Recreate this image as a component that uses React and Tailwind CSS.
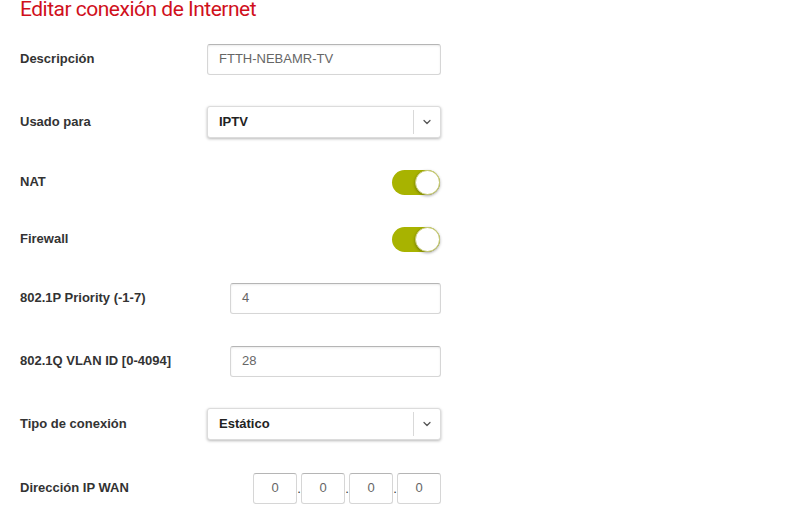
import { ChevronDown } from "lucide-react";

const labelCls = "w-[187px] shrink-0 text-[13px] font-bold text-[#333]";

const TextInput = ({ value, className = "" }) => (
  <div
    className={`h-[31px] flex items-center px-[11px] border border-[#d6d6d6] border-t-[#b5b5b5] rounded-[3px] shadow-[inset_0_1px_2px_rgba(0,0,0,0.08)] text-[13px] text-[#666] bg-white ${className}`}
  >
    {value}
  </div>
);

const Select = ({ value }) => (
  <div className="w-[234px] h-[32px] flex items-center border border-[#dcdcdc] rounded-[3px] shadow-[0_1px_3px_rgba(0,0,0,0.28)] bg-white">
    <span className="flex-1 pl-[11px] text-[13px] font-bold text-[#222]">{value}</span>
    <div className="w-px h-[24px] bg-[#d9d9d9]" />
    <div className="w-[26px] flex justify-center">
      <ChevronDown size={12} strokeWidth={2.5} className="text-[#555]" />
    </div>
  </div>
);

const Toggle = () => (
  <div className="ml-auto mr-[1px] w-[48px] h-[25px] rounded-full bg-[#a8b300] relative">
    <div className="absolute right-[0px] top-[0px] w-[25px] h-[25px] rounded-full bg-white border border-[#c9cc7a] shadow-[0_1px_3px_rgba(0,0,0,0.35)]" />
  </div>
);

const Row = ({ label, h, children }) => (
  <div className={`flex items-center ${h}`}>
    <div className={labelCls}>{label}</div>
    <div className="w-[234px] flex">{children}</div>
  </div>
);

export default function App() {
  const octets = ["0", "0", "0", "0"];
  return (
    <div className="w-[786px] h-[524px] overflow-hidden bg-white pl-[20px] font-['Liberation_Sans',Arial,sans-serif]">
      <div className="h-[30px]">
        <h1 className="-mt-[2px] text-[21px] leading-[22px] tracking-[-0.5px] text-[#d0101c] font-['Roboto',sans-serif] font-normal">
          Editar conexión de Internet
        </h1>
      </div>

      <Row label="Descripción" h="h-[62px]">
        <TextInput value="FTTH-NEBAMR-TV" className="w-[234px]" />
      </Row>
      <Row label="Usado para" h="h-[64px]">
        <Select value="IPTV" />
      </Row>
      <Row label="NAT" h="h-[56px]">
        <Toggle />
      </Row>
      <Row label="Firewall" h="h-[58px]">
        <Toggle />
      </Row>
      <Row label="802.1P Priority (-1-7)" h="h-[60px]">
        <TextInput value="4" className="ml-[23px] w-[211px]" />
      </Row>
      <Row label="802.1Q VLAN ID [0-4094]" h="h-[66px]">
        <TextInput value="28" className="ml-[23px] w-[211px]" />
      </Row>
      <Row label="Tipo de conexión" h="h-[60px]">
        <Select value="Estático" />
      </Row>
      <Row label="Dirección IP WAN" h="h-[68px]">
        <div className="ml-[46px] flex items-end">
          {octets.map((o, i) => (
            <div key={i} className="flex items-end">
              {i > 0 && <span className="w-[4px] text-center text-[13px] leading-[14px] mb-[8px] text-[#333]">.</span>}
              <div className="w-[44px] h-[31px] flex items-center justify-center border border-[#d6d6d6] border-t-[#b5b5b5] rounded-[3px] text-[13px] text-[#666]">
                {o}
              </div>
            </div>
          ))}
        </div>
      </Row>
    </div>
  );
}
